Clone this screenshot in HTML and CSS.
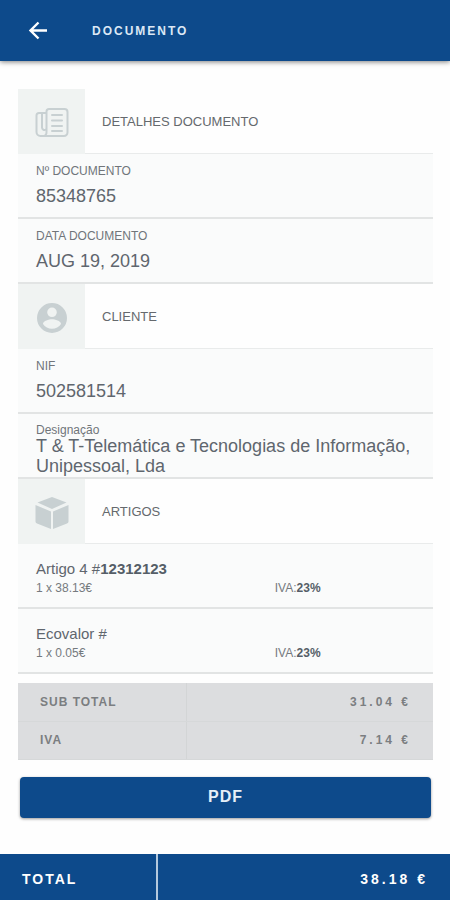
FILE: index.html
```html
<!DOCTYPE html>
<html lang="pt">
<head>
    <meta charset="UTF-8">
    <meta name="viewport" content="width=device-width, initial-scale=1.0">
    <title>Documento</title>
    <link rel="stylesheet" href="styles.css">
</head>
<body>
    <header class="topbar">
        <button type="button" class="back-btn" aria-label="Voltar">
            <svg width="24" height="24" viewBox="0 0 24 24" fill="none" stroke="currentColor" stroke-width="2.4">
                <path d="M21 11.500H4.500M12.500 3.500L4.500 11.500l8 8"/>
            </svg>
        </button>
        <h1>DOCUMENTO</h1>
    </header>

    <main class="content">
        <section>
            <div class="section-header">
                <div class="section-icon">
                    <svg width="36" height="36" viewBox="0 0 36 36" fill="none" stroke="currentColor" stroke-width="2" stroke-linecap="round">
                        <path d="M12.500 8V6.500A2.500 2.500 0 0 1 15 4H30.500a3 3 0 0 1 3 3V27.500a3.500 3.500 0 0 1-3.500 3.500H6.500a4 4 0 0 1-4-4V10.500A2.500 2.500 0 0 1 5 8H12.500V27a3.500 3.500 0 0 1-3.500 4"/>
                        <path d="M8 9V22.500a2.500 2.500 0 0 0 4 2"/>
                        <path d="M18 10h10M18 15.500h10M18 21h10M18 26h10"/>
                    </svg>
                </div>
                <h2>DETALHES DOCUMENTO</h2>
            </div>
            <div class="field">
                <span class="label">Nº DOCUMENTO</span>
                <span class="value">85348765</span>
            </div>
            <div class="field">
                <span class="label">DATA DOCUMENTO</span>
                <span class="value">AUG 19, 2019</span>
            </div>
        </section>

        <section>
            <div class="section-header">
                <div class="section-icon">
                    <svg width="36" height="36" viewBox="0 0 24 24" fill="currentColor">
                        <path d="M12 2a10 10 0 1 0 0 20 10 10 0 0 0 0-20zm0 3a3.200 3.200 0 1 1 0 6.400A3.200 3.200 0 0 1 12 5zm0 14.200a7.200 7.200 0 0 1-6-3.220c.03-1.990 4-3.080 6-3.080s5.970 1.090 6 3.080a7.200 7.200 0 0 1-6 3.220z"/>
                    </svg>
                </div>
                <h2>CLIENTE</h2>
            </div>
            <div class="field">
                <span class="label">NIF</span>
                <span class="value">502581514</span>
            </div>
            <div class="field field-long">
                <span class="label">Designação</span>
                <span class="value">T &amp; T-Telemática e Tecnologias de Informação, Unipessoal, Lda</span>
            </div>
        </section>

        <section>
            <div class="section-header">
                <div class="section-icon">
                    <svg width="36" height="36" viewBox="0 0 36 36" fill="currentColor">
                        <path d="M18 2L32.500 7.500 18 14 3.500 7.500z"/>
                        <path d="M1.500 10L17 16.500V34L3 28.500a2 2 0 0 1-1.500-2z"/>
                        <path d="M34.500 10L19 16.500V34l14-5.500a2 2 0 0 0 1.500-2z"/>
                    </svg>
                </div>
                <h2>ARTIGOS</h2>
            </div>
            <div class="article">
                <div class="article-name">Artigo 4 #<strong>12312123</strong></div>
                <div class="article-info">
                    <span>1 x 38.13€</span>
                    <span>IVA:<strong>23%</strong></span>
                </div>
            </div>
            <div class="article">
                <div class="article-name">Ecovalor #</div>
                <div class="article-info">
                    <span>1 x 0.05€</span>
                    <span>IVA:<strong>23%</strong></span>
                </div>
            </div>
        </section>

        <table class="totals">
            <tr>
                <th scope="row">SUB TOTAL</th>
                <td>31.04 €</td>
            </tr>
            <tr>
                <th scope="row">IVA</th>
                <td>7.14 €</td>
            </tr>
        </table>

        <button type="button" class="pdf-btn">PDF</button>
    </main>

    <footer class="total-bar">
        <span class="total-label">TOTAL</span>
        <span class="total-value">38.18 €</span>
    </footer>
</body>
</html>
```
FILE: styles.css
```css
* {
    box-sizing: border-box;
}

body {
    display: flex;
    flex-direction: column;
    min-height: 100vh;
    margin: 0;
    font-family: "Liberation Sans", Arial, sans-serif;
    color: #5f666e;
    background-color: #fefefe;
}

.topbar {
    display: flex;
    align-items: center;
    gap: 42px;
    height: 61px;
    padding: 0 26px;
    color: white;
    background-color: #0d4a8b;
    box-shadow: 0 1px 5px rgba(0, 0, 0, 0.5);
}

.topbar h1 {
    margin: 0;
    font-size: 12px;
    letter-spacing: 2px;
    color: #dce8f5;
}

.back-btn {
    display: flex;
    padding: 0;
    border: none;
    color: white;
    background: none;
    cursor: pointer;
}

.content {
    flex: 1;
    padding: 28px 17px 35px 18px;
}

.section-header {
    display: flex;
    align-items: center;
    height: 65px;
    border-bottom: 1px solid #e9ebeb;
}

.section-icon {
    display: flex;
    align-items: center;
    justify-content: center;
    width: 67px;
    height: 65px;
    padding-top: 4px;
    color: #c8d0d2;
    background-color: #f0f3f2;
}

.section-header h2 {
    margin: 0;
    padding-left: 17px;
    font-size: 13px;
    font-weight: normal;
    color: #65696d;
}

.field,
.article {
    min-height: 65px;
    padding: 10px 18px 0;
    border-bottom: 2px solid #e2e4e4;
    background-color: #fafbfb;
}

.label {
    display: block;
    font-size: 12px;
    line-height: 14px;
    color: #70757a;
}

.value {
    display: block;
    padding-top: 8px;
    font-size: 18px;
    line-height: 20px;
}

.field-long .label {
    line-height: 12px;
}

.field-long .value {
    padding-top: 0;
}

.article {
    padding-top: 16px;
}

.article-name {
    font-size: 15px;
    line-height: 18px;
}

.article-info {
    display: grid;
    grid-template-columns: 63% 1fr;
    font-size: 12px;
    line-height: 20px;
    color: #757a7e;
}

.article strong {
    color: #555e67;
}

.totals {
    width: 100%;
    margin-top: 9px;
    border-collapse: collapse;
    font-size: 12px;
    color: #7b7e81;
    background-color: #dcdddf;
}

.totals th,
.totals td {
    height: 38px;
    padding: 0 22px;
    border-bottom: 1px solid #d6d8d9;
    font-weight: bold;
}

.totals th {
    width: 168px;
    border-right: 1px solid #d3d5d6;
    text-align: left;
    letter-spacing: 1px;
}

.totals td {
    text-align: right;
    letter-spacing: 3px;
}

.pdf-btn {
    display: block;
    width: calc(100% - 4px);
    height: 41px;
    margin: 17px auto 0;
    border: none;
    border-radius: 4px;
    font-family: inherit;
    font-size: 16px;
    font-weight: bold;
    letter-spacing: 1px;
    color: #e6eff8;
    background-color: #0d4a8b;
    box-shadow: 0 1px 3px rgba(0, 0, 0, 0.4);
    cursor: pointer;
}

.total-bar {
    display: flex;
    height: 46px;
    font-size: 14px;
    font-weight: bold;
    line-height: 50px;
    letter-spacing: 2px;
    color: white;
    background-color: #0d4a8b;
}

.total-label {
    width: 35%;
    padding-left: 22px;
    border-right: 2px solid #b4c9de;
}

.total-value {
    flex: 1;
    padding-right: 22px;
    text-align: right;
    letter-spacing: 3px;
}
```
